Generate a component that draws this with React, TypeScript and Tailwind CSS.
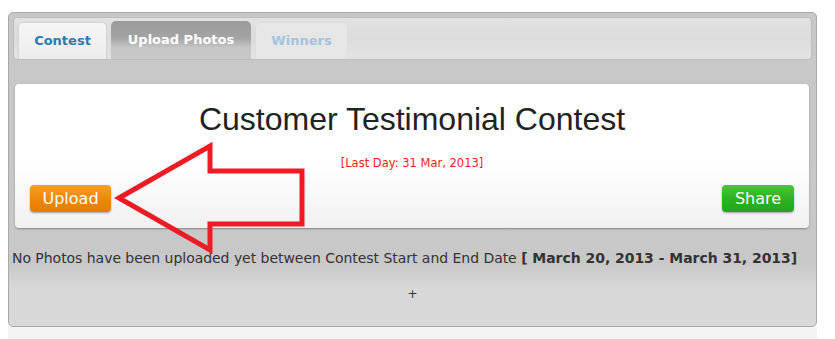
const tabFont = "font-['DejaVu_Sans',Verdana,sans-serif]";

const Tabs = () => (
  <div className="mx-[4px] mt-[4px] h-[43px] rounded-[4px] border border-[#bdbdbd] bg-[linear-gradient(#e1e1e1,#dcdcdc_50%,#e3e3e3)] flex items-end pl-[4px] gap-[4px]">
    <div
      className={`${tabFont} w-[89px] h-[37px] rounded-t-[5px] border border-b-0 border-[#d4d4d4] bg-[linear-gradient(#f6f6f6,#ececec)] flex items-center justify-center text-[13px] font-bold text-[#2b79b5]`}
    >
      Contest
    </div>
    <div
      className={`${tabFont} w-[140px] h-[38px] rounded-t-[5px] bg-[linear-gradient(#9a9a9a,#a4a4a4_45%,#c6c6c6_70%,#c8c8c8)] flex items-center justify-center text-[13px] font-bold text-white`}
    >
      Upload Photos
    </div>
    <div
      className={`${tabFont} w-[93px] h-[37px] rounded-t-[5px] border border-b-0 border-[#dcdcdc] bg-[#e6e6e6] flex items-center justify-center text-[13px] font-bold text-[#a3c3dc]`}
    >
      Winners
    </div>
  </div>
);

const Card = () => (
  <div className="ml-[6px] mr-[7px] mt-[24px] h-[144px] rounded-[4px] bg-[linear-gradient(#ffffff,#ffffff_55%,#f0f0f0)] shadow-[0_1px_2px_rgba(0,0,0,0.35)] flex flex-col px-[15px] pt-[17px] pb-[16px]">
    <h1 className="text-center font-['Liberation_Sans',Arial,sans-serif] text-[32px] leading-[36px] text-[#222]">
      Customer Testimonial Contest
    </h1>
    <p className="mt-[19px] text-center font-['DejaVu_Sans',Verdana,sans-serif] text-[11.5px] leading-[14px] text-[#ff1a1a]">
      [Last Day: 31 Mar, 2013]
    </p>
    <div className="mt-auto flex justify-between">
      <button className="w-[81px] h-[27px] rounded-[4px] bg-[linear-gradient(#f5a02a,#ec8506_60%,#e77c00)] shadow-[0_1px_2px_rgba(0,0,0,0.35)] font-['DejaVu_Sans',Verdana,sans-serif] text-[16px] text-white">
        Upload
      </button>
      <button className="w-[72px] h-[27px] rounded-[4px] bg-[linear-gradient(#4dc53b,#2cb01f_55%,#21a81a)] shadow-[0_1px_2px_rgba(0,0,0,0.35)] font-['DejaVu_Sans',Verdana,sans-serif] text-[16px] text-white">
        Share
      </button>
    </div>
  </div>
);

const Arrow = () => (
  <svg
    className="absolute left-0 top-0 pointer-events-none"
    width="835"
    height="339"
    viewBox="0 0 835 339"
  >
    <polygon
      points="119,198 210,146 210,171 302,171 302,224 210,224 210,250"
      fill="none"
      stroke="#ed1c24"
      strokeWidth="5"
      strokeLinejoin="miter"
    />
  </svg>
);

export default function App() {
  return (
    <div className="relative w-[835px] h-[339px] bg-white overflow-hidden">
      <div className="ml-[8px] mt-[12px] w-[809px] h-[315px] rounded-[5px] border border-[#a8a8a8] bg-[linear-gradient(#c8c8c8,#c8c8c8_80%,#d8d8d8_88%,#d8d8d8)] flex flex-col">
        <Tabs />
        <Card />
        <p className="mt-[21px] ml-[3px] whitespace-nowrap tracking-[-0.04px] font-['DejaVu_Sans',Tahoma,sans-serif] text-[14px] leading-[18px] text-[#333]">
          No Photos have been uploaded yet between Contest Start and End Date{" "}
          <span className="font-bold">[ March 20, 2013 - March 31, 2013]</span>
        </p>
        <p className="mt-[19px] text-center font-['DejaVu_Sans',Tahoma,sans-serif] text-[12px] leading-[16px] text-[#333]">
          +
        </p>
      </div>
      <div className="ml-[8px] w-[809px] h-[12px] bg-[#f4f4f4]" />
      <Arrow />
    </div>
  );
}
